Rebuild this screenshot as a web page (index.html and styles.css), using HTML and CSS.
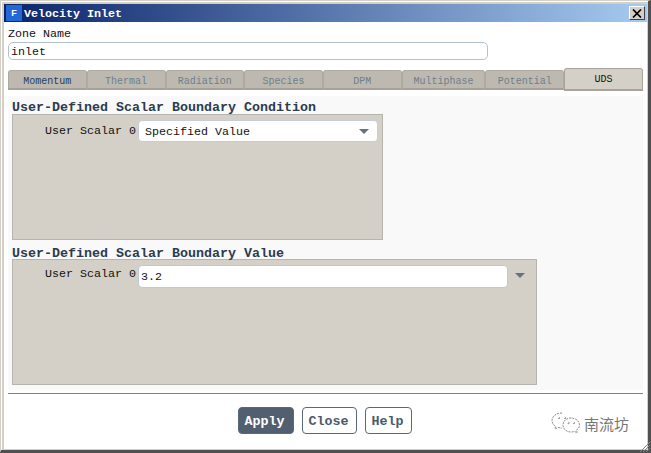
FILE: index.html
```html
<!DOCTYPE html>
<html lang="en">
<head>
    <meta charset="UTF-8">
    <title>Velocity Inlet</title>
    <link rel="stylesheet" href="styles.css">
</head>
<body>
    <div class="window">
        <div class="title-bar">
            <span class="app-icon">F</span>
            <span class="title-text">Velocity Inlet</span>
            <span class="close-box">
                <svg width="10" height="9" viewBox="0 0 10 9"><path d="M1 0.5 L9 8.5 M9 0.5 L1 8.5" stroke="#000" stroke-width="1.7" fill="none"/></svg>
            </span>
        </div>

        <div class="content">
            <div class="zone-label">Zone Name</div>
            <div class="zone-input">inlet</div>

            <div class="tabs">
                <div class="tab tab-first">Momentum</div>
                <div class="tab">Thermal</div>
                <div class="tab">Radiation</div>
                <div class="tab">Species</div>
                <div class="tab">DPM</div>
                <div class="tab tab-wide">Multiphase</div>
                <div class="tab">Potential</div>
                <div class="tab tab-active">UDS</div>
            </div>

            <div class="tab-panel">
                <h3 class="group-title">User-Defined Scalar Boundary Condition</h3>
                <div class="group group-condition">
                    <span class="field-label">User Scalar 0</span>
                    <div class="select-box">
                        <span>Specified Value</span>
                        <span class="arrow"></span>
                    </div>
                </div>

                <h3 class="group-title group-title-second">User-Defined Scalar Boundary Value</h3>
                <div class="group group-value">
                    <span class="field-label">User Scalar 0</span>
                    <div class="value-input">3.2</div>
                    <span class="arrow arrow-outside"></span>
                </div>
            </div>

            <div class="button-row">
                <div class="btn btn-primary">Apply</div>
                <div class="btn btn-close">Close</div>
                <div class="btn btn-help">Help</div>
            </div>
        </div>

        <div class="watermark">
            <svg width="32" height="24" viewBox="0 0 32 24" fill="none" stroke="#8a8a8a" stroke-width="1" stroke-dasharray="2 1">
                <path d="M12 2 C6 2 2 5.500 2 9.500 C2 12 3.500 14 5.500 15.500 L5 18 L8 16.500 C9.500 17 11 17 12 17"/>
                <path d="M21 7 C16.500 7 13 10 13 14 C13 18 16.500 21 21 21 C22.500 21 23.500 20.800 24.500 20.300 L27 22 L26.500 19 C28.500 17.800 29.500 16 29.500 14 C29.500 10 25.500 7 21 7 Z"/>
                <circle cx="9" cy="7" r="0.7"/>
                <circle cx="15" cy="7" r="0.7"/>
                <circle cx="18.500" cy="12" r="0.7"/>
                <circle cx="24" cy="12" r="0.7"/>
            </svg>
            <span>南流坊</span>
        </div>

        <svg class="grip" width="11" height="11" viewBox="0 0 11 11" stroke="#8a8880" stroke-width="1">
            <path d="M11 1 L1 11 M11 4 L4 11 M11 7 L7 11"/>
        </svg>
    </div>
</body>
</html>
```

FILE: styles.css
```css
* {
    margin: 0;
    padding: 0;
    box-sizing: border-box;
}

html, body {
    width: 651px;
    height: 453px;
    overflow: hidden;
}

body {
    font-family: "Liberation Mono", "Courier New", monospace;
    font-size: 11.67px;
    color: #111;
    background: #d4d0c8;
}

/* Outer window frame */
.window {
    position: relative;
    width: 651px;
    height: 453px;
    padding: 3px 1px 1px 3px;
    background: #d4d0c8;
    border-top: 1px solid #d4d0c8;
    border-left: 1px solid #d4d0c8;
    border-right: 3px solid #505050;
    border-bottom: 3px solid #505050;
    box-shadow: inset 1px 1px #fff;
    display: flex;
    flex-direction: column;
}

.title-bar {
    height: 18px;
    flex: none;
    display: flex;
    align-items: center;
    background: linear-gradient(to right, #0a246a, #a6caf0);
    color: #fff;
    font-weight: bold;
}

.app-icon {
    width: 16px;
    height: 16px;
    margin-left: 2px;
    background: #2468d8;
    color: #fff;
    font-family: "Liberation Sans", sans-serif;
    font-size: 9px;
    line-height: 16px;
    text-align: center;
}

.title-text {
    margin-left: 2px;
    padding-top: 2px;
}

.close-box {
    margin-left: auto;
    margin-right: 2px;
    width: 16px;
    height: 14px;
    display: flex;
    align-items: center;
    justify-content: center;
    background: #d4d0c8;
    border: 1px solid;
    border-color: #fff #404040 #404040 #fff;
}

.content {
    flex: 1;
    background: #fff;
    padding: 6px 4px 0 4px;
    display: flex;
    flex-direction: column;
}

.zone-label {
    height: 14px;
    line-height: 13px;
}

.zone-input {
    width: 480px;
    height: 18px;
    padding-left: 2px;
    line-height: 19px;
    background: #fff;
    border: 1px solid #b4c0cc;
    border-radius: 5px;
}

/* Tab strip */
.tabs {
    display: flex;
    align-items: flex-end;
    height: 23px;
    margin-top: 8px;
    margin-bottom: 5px;
}

.tab {
    width: 79px;
    height: 20px;
    margin-bottom: 1px;
    font-size: 10px;
    line-height: 21px;
    text-align: center;
    color: #6f7f8c;
    background: #bdb9b0;
    border: 1px solid #aeaaa0;
    border-bottom: 2px solid #a5a198;
    border-radius: 3px 3px 0 0;
}

.tab-first {
    color: #1f3f5f;
}

.tab-wide {
    width: 84px;
}

.tab-active {
    height: 23px;
    margin-bottom: 0;
    color: #111;
    background: #d4d0c8;
    line-height: 21px;
    border-color: #a8a49b;
}

.tab-panel {
    width: 635px;
    height: 294px;
    background: #f9f9f9;
    padding: 4px 0 0 4px;
}

.group-title {
    height: 14px;
    font-size: 13.33px;
    line-height: 16px;
    color: #2e3b4e;
    font-weight: bold;
}

.group-title-second {
    height: 13px;
    margin-top: 6px;
}

.group {
    display: flex;
    background: #d4d0c8;
    border: 1px solid #b6b4ae;
    height: 126px;
    padding: 5px 0 0 32px;
}

.group-condition {
    width: 371px;
}

.group-condition .field-label {
    padding-top: 2px;
}

.group-value {
    width: 525px;
}

.field-label {
    line-height: 18px;
    width: 93px;
    flex: none;
}

.select-box {
    width: 240px;
    height: 22px;
    display: flex;
    align-items: center;
    justify-content: space-between;
    padding: 1px 8px 0 6px;
    background: #fff;
    border: 1px solid #c6cdd6;
    border-radius: 4px;
}

.value-input {
    width: 370px;
    height: 23px;
    padding: 4px 0 0 2px;
    background: #fff;
    border: 1px solid #c0c8d4;
    border-radius: 4px;
}

.arrow {
    width: 0;
    height: 0;
    border-left: 5px solid transparent;
    border-right: 5px solid transparent;
    border-top: 5px solid #66727f;
}

.arrow-outside {
    margin: 8px 0 0 7px;
}

.button-row {
    border-top: 1px solid #808080;
    margin-top: 3px;
    padding-top: 13px;
    padding-right: 2px;
    display: flex;
    justify-content: center;
    gap: 8px;
}

.btn {
    height: 27px;
    padding: 0 6px;
    font-size: 13.33px;
    font-weight: bold;
    line-height: 28px;
    color: #4a5a6c;
    background: #fff;
    border: 1px solid #5a6878;
    border-radius: 4px;
}

.btn-primary {
    width: 56px;
    color: #fff;
    background: #515f70;
}

.btn-close {
    width: 55px;
}

.btn-help {
    width: 47px;
}

/* Watermark sits over the dialog */
.watermark {
    position: absolute;
    left: 549px;
    top: 410px;
    display: flex;
    align-items: center;
    gap: 2px;
    font-family: "Noto Sans CJK SC", sans-serif;
    font-size: 15px;
    color: #777;
}

.grip {
    position: absolute;
    right: -2px;
    bottom: -2px;
}
```
